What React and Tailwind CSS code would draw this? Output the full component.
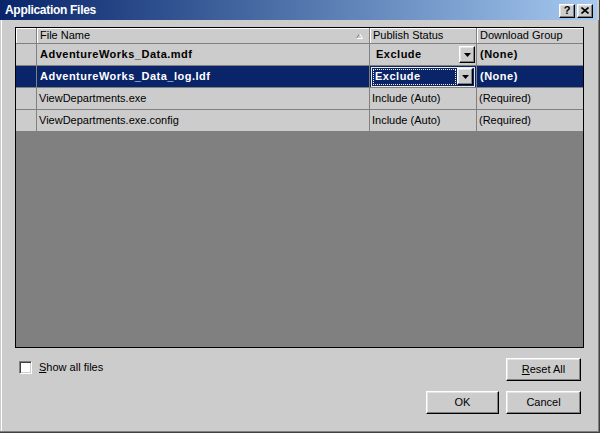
import React from "react";

const raised =
  "border border-t-white border-l-white border-r-black border-b-black shadow-[inset_-1px_-1px_0_#808080,inset_1px_1px_0_#e4e4e4] bg-[#cccccc]";

function DropBtn() {
  return (
    <div className={`w-[16px] h-[17px] flex items-center justify-center ${raised}`}>
      <svg width="7" height="4" viewBox="0 0 7 4">
        <polygon points="0,0 7,0 3.5,4" fill="#000" />
      </svg>
    </div>
  );
}

function Btn({ children, w = "w-[75px]" }) {
  return (
    <div className={`${w} h-[23px] flex items-center justify-center text-[11px] text-black ${raised}`}>
      {children}
    </div>
  );
}

export default function App() {
  const font = "font-['Liberation_Sans',Arial,sans-serif]";
  const cellR = "border-r border-[#808080]";
  return (
    <div className={`w-[600px] h-[433px] bg-[#cccccc] ${font} flex flex-col relative border-r border-b border-r-[#404040] border-b-[#404040]`}>
      <div className="absolute left-[1px] top-[20px] bottom-[1px] w-[1px] bg-white" />
      <div className="absolute right-0 top-[20px] bottom-0 w-[1px] bg-[#808080]" />
      <div className="absolute left-0 right-0 bottom-0 h-[1px] bg-[#808080]" />
      {/* title bar */}
      <div className="h-[20px] w-[597px] bg-gradient-to-r from-[#0a246a] to-[#a6caf0] flex items-center justify-between pl-[5px] pr-[4px]">
        <span className="text-white font-bold text-[12px] tracking-[-0.3px] leading-none">Application Files</span>
        <div className="flex gap-[2px] mt-[1px]">
          <div className={`w-[16px] h-[14px] flex items-center justify-center text-[11px] font-bold leading-none text-black ${raised}`}>?</div>
          <div className={`w-[16px] h-[14px] flex items-center justify-center ${raised}`}>
            <svg width="8" height="7" viewBox="0 0 8 7">
              <path d="M0.5 0.5 L7.5 6.5 M7.5 0.5 L0.5 6.5" stroke="#000" strokeWidth="1.6" />
            </svg>
          </div>
        </div>
      </div>

      {/* grid */}
      <div className="ml-[15px] mt-[7px] w-[569px] h-[321px] border border-black bg-[#808080] flex flex-col text-[11px] text-black">
        {/* header */}
        <div className="flex h-[16px] bg-[#cccccc] border-b border-[#808080] shrink-0">
          <div className={`w-[21px] ${cellR} shadow-[inset_1px_1px_0_#fff]`} />
          <div className={`w-[333px] ${cellR} shadow-[inset_1px_1px_0_#fff] flex items-center justify-between pl-[3px] pr-[6px]`}>
            <span>File Name</span>
            <svg width="7" height="6" viewBox="0 0 7 6">
              <path d="M0.5 5.5 L3.5 0.5" stroke="#808080" />
              <path d="M3.5 0.5 L6.5 5.5 L0.5 5.5" stroke="#fff" fill="none" />
            </svg>
          </div>
          <div className={`w-[107px] ${cellR} shadow-[inset_1px_1px_0_#fff] flex items-center pl-[3px]`}>Publish Status</div>
          <div className="w-[106px] shadow-[inset_1px_1px_0_#fff] flex items-center pl-[3px]">Download Group</div>
        </div>
        {/* row 1 */}
        <div className="flex h-[22px] bg-[#cccccc] border-b border-[#808080] shrink-0">
          <div className={`w-[21px] ${cellR}`} />
          <div className={`w-[333px] ${cellR} flex items-center pl-[3px] font-bold tracking-[0.5px]`}>AdventureWorks_Data.mdf</div>
          <div className={`w-[107px] ${cellR} flex items-center justify-between pl-[6px] pr-[1px]`}>
            <span className="font-bold tracking-[0.5px]">Exclude</span>
            <DropBtn />
          </div>
          <div className="w-[106px] flex items-center pl-[3px] font-bold tracking-[0.5px]">(None)</div>
        </div>
        {/* row 2 selected */}
        <div className="flex h-[22px] bg-[#0a246a] border-b border-[#808080] shrink-0 text-white">
          <div className={`w-[21px] ${cellR}`} />
          <div className={`w-[333px] ${cellR} flex items-center pl-[3px] font-bold tracking-[0.5px]`}>AdventureWorks_Data_log.ldf</div>
          <div className={`w-[107px] ${cellR} flex items-center pl-[1px] pr-[1px]`}>
            <div className="w-[104px] h-[20px] border border-[#e8e8e8] flex items-center p-[1px] gap-[1px]">
              <div className="flex-1 h-full border border-dotted border-[#fff7c0] flex items-center pl-[1px] font-bold tracking-[0.5px]">Exclude</div>
              <DropBtn />
            </div>
          </div>
          <div className="w-[106px] flex items-center pl-[3px] font-bold tracking-[0.5px]">(None)</div>
        </div>
        {/* row 3 */}
        <div className="flex h-[22px] bg-[#cccccc] border-b border-[#808080] shrink-0">
          <div className={`w-[21px] ${cellR}`} />
          <div className={`w-[333px] ${cellR} flex items-center pl-[2px]`}>ViewDepartments.exe</div>
          <div className={`w-[107px] ${cellR} flex items-center pl-[2px]`}>Include (Auto)</div>
          <div className="w-[106px] flex items-center pl-[2px]">(Required)</div>
        </div>
        {/* row 4 */}
        <div className="flex h-[22px] bg-[#cccccc] border-b border-[#808080] shrink-0">
          <div className={`w-[21px] ${cellR}`} />
          <div className={`w-[333px] ${cellR} flex items-center pl-[2px]`}>ViewDepartments.exe.config</div>
          <div className={`w-[107px] ${cellR} flex items-center pl-[2px]`}>Include (Auto)</div>
          <div className="w-[106px] flex items-center pl-[2px]">(Required)</div>
        </div>
      </div>

      {/* bottom */}
      <div className="flex justify-between items-start mt-[10px] pl-[19px] pr-[18px] text-[11px] text-black">
        <div className="flex items-center gap-[7px] mt-[1px]">
          <div className="w-[13px] h-[13px] bg-white border border-t-[#808080] border-l-[#808080] border-b-white border-r-white shadow-[inset_1px_1px_0_#404040,inset_-1px_-1px_0_#cccccc]" />
          <span><span className="underline">S</span>how all files</span>
        </div>
        <Btn><span><span className="underline">R</span>eset All</span></Btn>
      </div>
      <div className="flex justify-end gap-[7px] mt-[10px] pr-[18px]">
        <Btn w="w-[73px]">OK</Btn>
        <Btn>Cancel</Btn>
      </div>
    </div>
  );
}
